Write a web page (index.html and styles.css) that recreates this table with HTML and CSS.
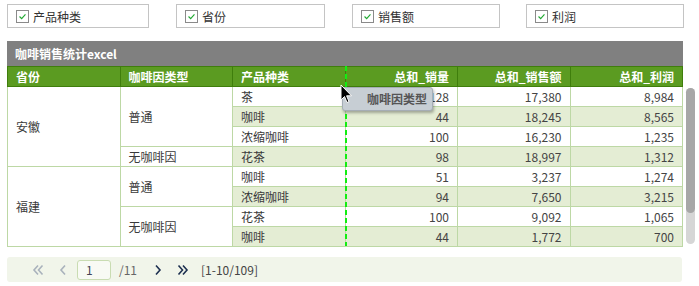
FILE: index.html
```html
<!DOCTYPE html>
<html lang="zh">
<head>
<meta charset="utf-8">
<link rel="stylesheet" href="styles.css">
</head>
<body>
<div class="page">
  <div class="filters">
    <label class="filter f1"><span class="cb"><svg viewBox="0 0 13 13" width="13" height="13"><path d="M3 6.5 L5.5 9 L10 4" fill="none" stroke="#22aa33" stroke-width="1.4"/></svg></span>产品种类</label>
    <label class="filter f2"><span class="cb"><svg viewBox="0 0 13 13" width="13" height="13"><path d="M3 6.5 L5.5 9 L10 4" fill="none" stroke="#22aa33" stroke-width="1.4"/></svg></span>省份</label>
    <label class="filter f3"><span class="cb"><svg viewBox="0 0 13 13" width="13" height="13"><path d="M3 6.5 L5.5 9 L10 4" fill="none" stroke="#22aa33" stroke-width="1.4"/></svg></span>销售额</label>
    <label class="filter f4"><span class="cb"><svg viewBox="0 0 13 13" width="13" height="13"><path d="M3 6.5 L5.5 9 L10 4" fill="none" stroke="#22aa33" stroke-width="1.4"/></svg></span>利润</label>
  </div>

  <div class="report">
    <div class="main">
      <div class="title">咖啡销售统计excel</div>
      <div class="table-wrap">
        <table class="grid">
          <thead>
            <tr>
              <th>省份</th><th>咖啡因类型</th><th>产品种类</th>
              <th class="num">总和_销量</th><th class="num">总和_销售额</th><th class="num">总和_利润</th>
            </tr>
          </thead>
          <tbody>
            <tr>
              <td rowspan="4" class="merged">安徽</td><td rowspan="3" class="merged">普通</td>
              <td>茶</td><td class="num">128</td><td class="num">17,380</td><td class="num">8,984</td>
            </tr>
            <tr class="alt"><td>咖啡</td><td class="num">44</td><td class="num">18,245</td><td class="num">8,565</td></tr>
            <tr><td>浓缩咖啡</td><td class="num">100</td><td class="num">16,230</td><td class="num">1,235</td></tr>
            <tr class="alt"><td class="merged">无咖啡因</td><td>花茶</td><td class="num">98</td><td class="num">18,997</td><td class="num">1,312</td></tr>
            <tr>
              <td rowspan="4" class="merged">福建</td><td rowspan="2" class="merged">普通</td>
              <td>咖啡</td><td class="num">51</td><td class="num">3,237</td><td class="num">1,274</td>
            </tr>
            <tr class="alt"><td>浓缩咖啡</td><td class="num">94</td><td class="num">7,650</td><td class="num">3,215</td></tr>
            <tr><td rowspan="2" class="merged">无咖啡因</td><td>花茶</td><td class="num">100</td><td class="num">9,092</td><td class="num">1,065</td></tr>
            <tr class="alt"><td>咖啡</td><td class="num">44</td><td class="num">1,772</td><td class="num">700</td></tr>
          </tbody>
        </table>
        <div class="drop-line"></div>
        <div class="drag-ghost">咖啡因类型</div>
        <svg class="cursor" width="13" height="20" viewBox="0 0 13 20"><path d="M1 1 L1 16 L4.5 12.5 L7 18.5 L9 17.6 L6.6 11.8 L11.5 11.8 Z" fill="#000" stroke="#fff" stroke-width="1"/></svg>
      </div>
    </div>
    <div class="scrollbar"><div class="thumb"></div></div>
  </div>

  <div class="pager">
    <span class="pg-btn off"><svg width="12" height="12" viewBox="0 0 12 12"><path d="M6 1.5 L2 6 L6 10.5 M10.5 1.5 L6.5 6 L10.5 10.5" fill="none" stroke="#a9b2bc" stroke-width="1.6"/></svg></span>
    <span class="pg-btn off single"><svg width="8" height="12" viewBox="0 0 8 12"><path d="M6 1.5 L2 6 L6 10.5" fill="none" stroke="#a9b2bc" stroke-width="1.6"/></svg></span>
    <span class="pg-input">1</span>
    <span class="pg-total">/11</span>
    <span class="pg-btn on single"><svg width="8" height="12" viewBox="0 0 8 12"><path d="M2 1.5 L6 6 L2 10.5" fill="none" stroke="#1d3050" stroke-width="1.6"/></svg></span>
    <span class="pg-btn on"><svg width="12" height="12" viewBox="0 0 12 12"><path d="M1.5 1.5 L5.5 6 L1.5 10.5 M6 1.5 L10 6 L6 10.5" fill="none" stroke="#1d3050" stroke-width="1.6"/></svg></span>
    <span class="pg-info">[1-10/109]</span>
  </div>
</div>
</body>
</html>
```
FILE: styles.css
```css
html, body {
  margin: 0;
  padding: 0;
  background: #fff;
}
body {
  font-family: "Noto Sans CJK SC", "Noto Sans", sans-serif;
  font-size: 12px;
  color: #333;
}
.page {
  padding: 4px 0 0 7px;
}
.filters {
  display: flex;
  gap: 27px;
  height: 24px;
}
.filter {
  box-sizing: border-box;
  height: 24px;
  border: 1px solid #c4c4c4;
  display: flex;
  align-items: center;
  padding-left: 8px;
  font-size: 12px;
  color: #333;
}
.f1 { width: 142px; }
.f2 { width: 149px; }
.f3 { width: 148px; }
.f4 { width: 158px; margin-left: -1px; }
.cb {
  box-sizing: border-box;
  width: 13px;
  height: 13px;
  border: 1px solid #8a8a8a;
  background: #fff;
  margin-right: 4px;
  display: flex;
  align-items: center;
  justify-content: center;
}
.cb svg { display: block; }

.report {
  margin-top: 13px;
  display: flex;
  align-items: flex-start;
}
.main {
  width: 676px;
}
.title {
  height: 25px;
  line-height: 25px;
  background: #808080;
  color: #fff;
  font-weight: bold;
  padding-left: 8px;
  font-size: 12px;
}
.table-wrap {
  position: relative;
}
.grid {
  width: 676px;
  table-layout: fixed;
  border-collapse: collapse;
}
.grid th, .grid td {
  height: 19px;
  padding: 0 8px;
  font-size: 12px;
  text-align: left;
  white-space: nowrap;
  overflow: hidden;
}
.grid th {
  background: #5b9b21;
  color: #fff;
  font-weight: bold;
  border: 1px solid #3f7e0c;
}
.grid td {
  border: 1px solid #bdd8a5;
  background: #fff;
  color: #3a3a3a;
}
.grid tr.alt td {
  background: #e4edd4;
}
.grid tr.alt td.merged, .grid td.merged {
  background: #fff;
}
.grid .num {
  text-align: right;
}
.grid td.num {
  color: #444;
}
.drop-line {
  position: absolute;
  left: 338px;
  top: 0;
  width: 2px;
  height: 180px;
  background: repeating-linear-gradient(to bottom, #11ee11 0 5px, transparent 5px 8px);
}
.drag-ghost {
  position: absolute;
  left: 335px;
  top: 21px;
  box-sizing: border-box;
  width: 91px;
  height: 24px;
  line-height: 22px;
  background: #c7ced4;
  border: 1px solid #a5adb5;
  border-radius: 3px;
  box-shadow: 1px 2px 3px rgba(0,0,0,0.3);
  color: #555;
  font-weight: bold;
  text-align: right;
  padding-right: 5px;
}
.cursor {
  position: absolute;
  left: 333px;
  top: 18px;
}
.scrollbar {
  margin-left: 3px;
  margin-top: 47px;
  width: 9px;
  height: 156px;
  background: #d6d6d6;
  border-radius: 5px;
}
.thumb {
  height: 125px;
  background: #a7a7a7;
  border-radius: 5px;
}

.pager {
  margin-top: 10px;
  width: 675px;
  height: 25px;
  background: #f1f5ea;
  border-radius: 3px;
  display: flex;
  align-items: center;
  padding-left: 25px;
  box-sizing: border-box;
}
.pg-btn {
  display: flex;
  align-items: center;
}
.pg-btn svg { display: block; }
.pg-btn.off:first-child { margin-right: 15px; }
.pg-btn.off.single { margin-right: 10px; }
.pg-input {
  box-sizing: border-box;
  width: 34px;
  height: 20px;
  border: 1px solid #c9dcb2;
  border-radius: 3px;
  background: #f8faf4;
  padding-left: 8px;
  line-height: 18px;
  color: #445;
}
.pg-total {
  margin-left: 8px;
  color: #666;
  width: 35px;
}
.pg-btn.on.single { margin-right: 15px; }
.pg-info {
  margin-left: 12px;
  color: #444;
}
```
